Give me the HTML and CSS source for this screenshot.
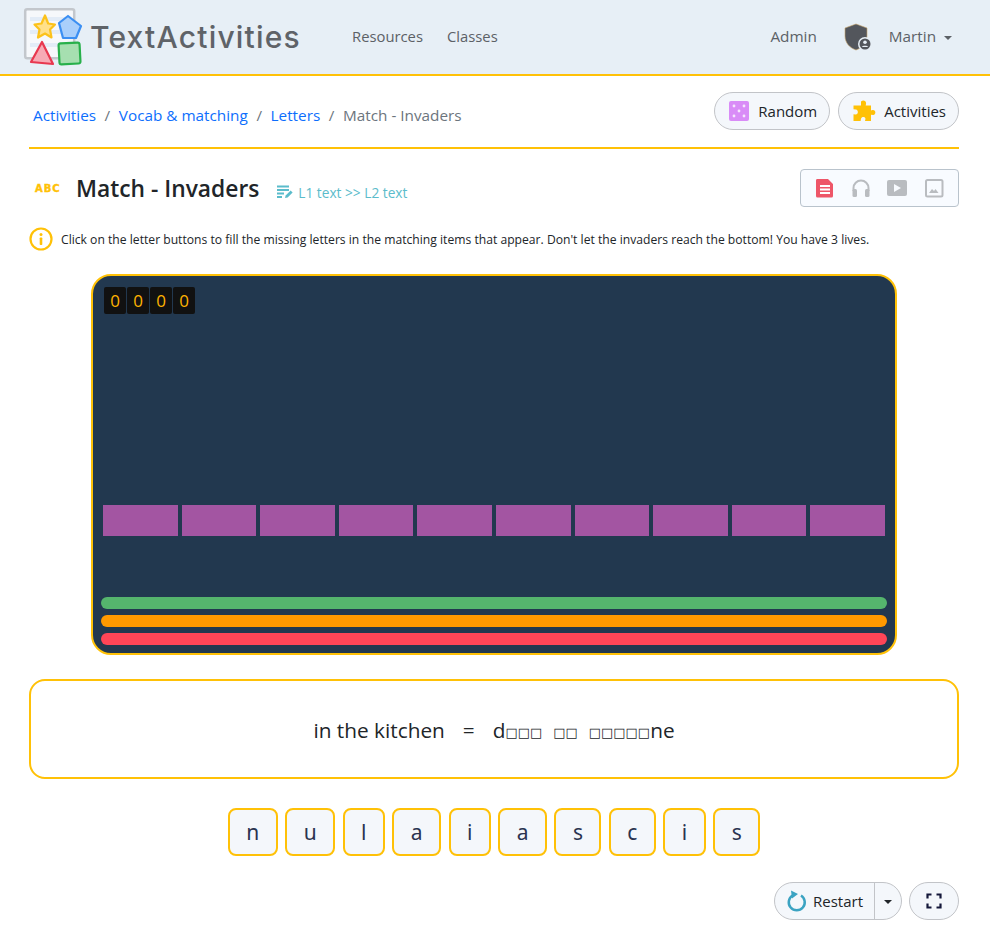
FILE: index.html
```html
<!DOCTYPE html>
<html lang="en">
<head>
  <meta charset="UTF-8" />
  <meta name="viewport" content="width=device-width, initial-scale=1" />
  <title>Match - Invaders</title>
  <link rel="stylesheet" href="styles.css">
</head>
<body>

<header class="topbar">
  <a class="brand">
    <svg class="brand-logo" width="60" height="60" viewBox="0 0 60 60">
      <rect x="2.200" y="2.200" width="49" height="49" rx="2" fill="#f6f8fb" stroke="#c3c7cc" stroke-width="2.500"/>
      <path d="M7 12h38M7 25h38M7 38h38" stroke="#e3ecf7" stroke-width="4"/>
      <path d="M22 8.500L25.200 16.500 32 17.500 27 22.500 28.500 30.500 22 26.500 15 30.500 16.500 22.500 11.500 17.500 18.500 16.500z" fill="#ffe08a" stroke="#fcc21b" stroke-width="2.200" stroke-linejoin="round"/>
      <path d="M45 9L58 19 53 31H40L36 16z" fill="#a9cffb" stroke="#3b8ff3" stroke-width="2.200" stroke-linejoin="round"/>
      <path d="M19 35L30 57 8 55z" fill="#f7aab5" stroke="#e8384f" stroke-width="2.200" stroke-linejoin="round"/>
      <rect x="36" y="36" width="21" height="21" rx="2" transform="rotate(-3 46 46)" fill="#a6dfb0" stroke="#28b04b" stroke-width="2.200"/>
    </svg>
    <span class="brand-name">TextActivities</span>
  </a>
  <nav class="nav-main">
    <a>Resources</a>
    <a>Classes</a>
  </nav>
  <nav class="nav-user">
    <a class="nav-admin">Admin</a>
    <svg class="shield" width="30" height="28" viewBox="0 0 30 28">
      <path d="M12 1l11 4v8c0 7-5 12-11 14C6 25 1 20 1 13V5z" fill="#53565c" stroke="#c9a66b" stroke-width="0.600"/>
      <circle cx="21" cy="21" r="7" fill="#e7eff6"/>
      <circle cx="21" cy="21" r="5.500" fill="#53565c"/>
      <circle cx="21" cy="19.300" r="1.800" fill="#e7eff6"/>
      <path d="M17.800 24c.6-1.600 5.800-1.600 6.400 0z" fill="#e7eff6"/>
    </svg>
    <a class="nav-name">Martin <span class="caret"></span></a>
  </nav>
</header>

<main class="page">
  <div class="crumb-row">
    <ol class="crumbs">
      <li><a>Activities</a></li>
      <li><a>Vocab &amp; matching</a></li>
      <li><a>Letters</a></li>
      <li class="current">Match - Invaders</li>
    </ol>
    <div class="crumb-btns">
      <button class="pill">
        <svg width="22" height="22" viewBox="0 0 22 22">
          <rect x="1" y="1" width="20" height="20" rx="2" fill="#d98cf7"/>
          <g fill="#f6e6fd"><circle cx="6" cy="6" r="1.400"/><circle cx="16" cy="6" r="1.400"/><circle cx="11" cy="11" r="1.400"/><circle cx="6" cy="16" r="1.400"/><circle cx="16" cy="16" r="1.400"/></g>
        </svg>
        Random
      </button>
      <button class="pill">
        <svg width="24" height="24" viewBox="0 0 24 24">
          <path d="M9 2.500c2.500-2 5.500-.5 5 2.500l-.3 1.500H19v5l1.500-.4c3-.6 4.200 3.900.8 5L19 15.800V22h-6l.4-1.800c.5-2.400-3.800-3-4.400-.4L8.600 22H1.500v-6.800l2 .3c2.700.3 3.400-4.300.4-5l-2.400-.2V6.500H9z" fill="#ffc107"/>
        </svg>
        Activities
      </button>
    </div>
  </div>

  <div class="title-row">
    <span class="abc">ABC</span>
    <h1>Match - Invaders</h1>
    <span class="mode">
      <svg width="16" height="14" viewBox="0 0 16 14">
        <path d="M0 1.500h12M0 5h12M0 8.500h7M0 12h5" stroke="#5bbccb" stroke-width="1.800"/>
        <path d="M8 13l.6-2.600 5-5 2 2-5 5z" fill="#5bbccb"/>
      </svg>
      L1 text &gt;&gt; L2 text
    </span>
    <div class="media-box">
      <svg width="20" height="20" viewBox="0 0 20 20"><path d="M2 1h11l5 5v12a1.500 1.500 0 0 1-1.500 1.500h-14A1.500 1.500 0 0 1 1 18V2.500A1.500 1.500 0 0 1 2 1z" fill="#ee5668"/><path d="M5 8h10M5 11.500h10M5 15h10" stroke="#fff" stroke-width="1.800"/></svg>
      <svg width="20" height="20" viewBox="0 0 20 20"><path d="M2.500 13v-3a7.500 7.500 0 0 1 15 0v3" fill="none" stroke="#b9bcc0" stroke-width="2"/><rect x="1.500" y="11" width="4.500" height="8" rx="1.500" fill="#b9bcc0"/><rect x="14" y="11" width="4.500" height="8" rx="1.500" fill="#b9bcc0"/></svg>
      <svg width="22" height="20" viewBox="0 0 22 20"><rect x="1" y="2" width="20" height="16" rx="2" fill="#b9bcc0"/><path d="M8 6l7 4-7 4z" fill="#f8fbff"/></svg>
      <svg width="20" height="20" viewBox="0 0 20 20"><rect x="2" y="2" width="16.500" height="16.500" rx="1.500" fill="none" stroke="#b9bcc0" stroke-width="2"/><path d="M5 15l3-4 2 2 1.500-2 3 4z" fill="#b9bcc0"/></svg>
    </div>
  </div>

  <p class="info">
    <svg width="24" height="24" viewBox="0 0 24 24">
      <circle cx="12" cy="12" r="10.500" fill="none" stroke="#ffc107" stroke-width="2.200"/>
      <circle cx="12" cy="7.500" r="1.500" fill="#ffc107"/>
      <rect x="10.700" y="10.500" width="2.600" height="7.500" rx="0.800" fill="#ffc107"/>
    </svg>
    Click on the letter buttons to fill the missing letters in the matching items that appear. Don't let the invaders reach the bottom! You have 3 lives.
  </p>

  <section class="game">
    <div class="score">
      <span>0</span><span>0</span><span>0</span><span>0</span>
    </div>
    <div class="invaders">
      <i></i><i></i><i></i><i></i><i></i><i></i><i></i><i></i><i></i><i></i>
    </div>
    <div class="lives">
      <i class="green"></i>
      <i class="orange"></i>
      <i class="red"></i>
    </div>
  </section>

  <div class="prompt">
    <span>in the kitchen</span>
    <span>=</span>
    <span class="answer">d<b>□□□</b> <b>□□</b> <b>□□□□□</b>ne</span>
  </div>

  <div class="letters">
    <button>n</button>
    <button>u</button>
    <button>l</button>
    <button>a</button>
    <button>i</button>
    <button>a</button>
    <button>s</button>
    <button>c</button>
    <button>i</button>
    <button>s</button>
  </div>

  <div class="controls">
    <div class="split">
      <button class="restart">
        <svg width="22" height="24" viewBox="0 0 22 24">
          <path d="M6.500 6.500a8 8 0 1 0 8.500 0" fill="none" stroke="#3ba3c2" stroke-width="2.500"/>
          <path d="M5 1.500l7 3.500-6 4.500z" fill="#3ba3c2"/>
        </svg>
        Restart
      </button>
      <button class="more"><span class="caret dark"></span></button>
    </div>
    <button class="fullscreen">
      <svg width="16" height="16" viewBox="0 0 16 16">
        <path d="M1.500 5.500v-4h4M10.500 1.500h4v4M14.500 10.500v4h-4M5.500 14.500h-4v-4" fill="none" stroke="#15183a" stroke-width="2.200"/>
      </svg>
    </button>
  </div>
</main>

</body>
</html>
```

FILE: styles.css
```css
body {
  font-family: 'Open Sans', 'Noto Sans', sans-serif;
  color: #212529;
  background: #fff;
  margin: 0;
}
button {
  font-family: inherit;
  color: inherit;
  cursor: pointer;
}

/* top bar */
.topbar {
  display: flex;
  align-items: center;
  height: 74px;
  padding: 0 38px 0 23px;
  background-color: #e7eff6;
  border-bottom: 2px solid #ffc107;
}
.brand {
  display: flex;
  align-items: center;
  gap: 7px;
  width: 329px;
}
.brand-name {
  font-family: Inter, sans-serif;
  font-size: 30px;
  font-weight: 500;
  letter-spacing: 1.2px;
  color: #5f6368;
}
.nav-main {
  display: flex;
  gap: 24px;
  margin-bottom: 3px;
  font-size: 14.800px;
  color: #5c6166;
}
.nav-user {
  margin-left: auto;
  margin-bottom: 3px;
  display: flex;
  align-items: center;
  font-size: 15.300px;
  color: #5c6166;
}
.shield {
  margin: 3px 15px 0 27px;
}
.caret {
  display: inline-block;
  margin-left: 4px;
  vertical-align: 2px;
  border-top: 4px solid #5c6166;
  border-left: 4px solid transparent;
  border-right: 4px solid transparent;
}
.caret.dark {
  margin: 0;
  vertical-align: middle;
  border-top-color: #212529;
}

.page {
  padding: 16px 31px 0 29px;
}

/* breadcrumb row */
.crumb-row {
  display: flex;
  justify-content: space-between;
  align-items: center;
  height: 38px;
  padding-bottom: 17px;
  border-bottom: 2px solid #ffc107;
}
.crumbs {
  display: flex;
  list-style: none;
  margin: 0;
  padding: 8px 0 0 4px;
  font-size: 15.300px;
  color: #6c757d;
}
.crumbs li + li::before {
  content: "/";
  padding: 0 8.600px;
  color: #6c757d;
}
.crumbs a {
  color: #0d6efd;
}
.crumb-btns {
  display: flex;
  gap: 8px;
}
.pill {
  display: flex;
  align-items: center;
  gap: 8px;
  height: 38px;
  padding: 0 12px 0 13px;
  font-size: 15px;
  background: #f4f7fb;
  border: 1px solid #c2c4c8;
  border-radius: 19px;
}

/* title */
.title-row {
  display: flex;
  align-items: center;
  height: 38px;
  margin-top: 20px;
}
.abc {
  width: 47px;
  padding-left: 6px;
  box-sizing: border-box;
  font-family: 'DejaVu Sans', sans-serif;
  font-size: 10px;
  font-weight: 700;
  letter-spacing: 1px;
  -webkit-text-stroke: 0.4px #ffc107;
  color: #ffc107;
}
h1 {
  margin: 0;
  font-size: 22.800px;
  font-weight: 600;
  color: #212529;
}
.mode {
  display: flex;
  align-items: center;
  gap: 5px;
  margin: 8px 0 0 18px;
  font-size: 13.700px;
  color: #5bbccb;
}
.media-box {
  display: flex;
  align-items: center;
  gap: 15.700px;
  margin-left: auto;
  height: 36px;
  padding: 0 14px;
  background: #f8fbff;
  border: 1px solid #b9c3cc;
  border-radius: 4px;
}

.info {
  display: flex;
  align-items: center;
  gap: 8px;
  height: 24px;
  margin: 20px 0 0;
  font-size: 12.150px;
  color: #212529;
}

/* game area */
.game {
  display: flex;
  flex-direction: column;
  box-sizing: border-box;
  width: 806px;
  height: 381px;
  margin: 23px 0 0 62px;
  padding: 11px 8px 8px;
  background-color: #22384f;
  border: 2px solid #ffc107;
  border-radius: 20px;
}
.score {
  display: flex;
  gap: 1px;
  margin-left: 3px;
}
.score span {
  width: 22px;
  height: 27px;
  line-height: 27px;
  text-align: center;
  font-size: 17px;
  color: #ffb300;
  background: #111;
  border-radius: 2px;
}
.invaders {
  display: grid;
  grid-template-columns: repeat(10, 1fr);
  gap: 4px;
  margin: 191px 2px 0;
}
.invaders i {
  height: 31px;
  background-color: #a355a2;
}
.lives {
  display: flex;
  flex-direction: column;
  gap: 6px;
  margin-top: auto;
}
.lives i {
  height: 12px;
  border-radius: 6px;
}
.green { background-color: #55b56d; }
.orange { background-color: #ff9900; }
.red { background-color: #ff4557; }

/* prompt */
.prompt {
  display: flex;
  justify-content: center;
  align-items: center;
  gap: 18px;
  height: 100px;
  margin-top: 24px;
  padding-top: 1px;
  box-sizing: border-box;
  border: 2px solid #ffc107;
  border-radius: 16px;
  font-size: 20.800px;
}
.answer {
  word-spacing: 5.500px;
}
.prompt b {
  font-family: 'DejaVu Sans', sans-serif;
  font-weight: 400;
  font-size: 13px;
  vertical-align: 1px;
}

/* letters */
.letters {
  display: flex;
  justify-content: center;
  gap: 7.500px;
  margin-top: 29px;
}
.letters button {
  height: 48px;
  min-width: 42px;
  padding: 0 16.450px;
  font-size: 21px;
  font-family: 'Noto Sans', sans-serif;
  color: #2a3350;
  background: #f4f7fb;
  border: 2px solid #ffc107;
  border-radius: 8px;
}

/* bottom controls */
.controls {
  display: flex;
  justify-content: flex-end;
  gap: 7px;
  margin-top: 26px;
}
.split {
  display: flex;
  height: 38px;
  background: #f4f7fb;
  border: 1px solid #c2c4c8;
  border-radius: 19px;
  box-sizing: border-box;
}
.split button {
  background: none;
  border: 0;
}
.restart {
  display: flex;
  align-items: center;
  gap: 5px;
  width: 99px;
  padding: 0 0 0 11px;
  font-size: 15px;
}
.more {
  width: 27px;
  padding: 0;
  border-left: 1px solid #c2c4c8 !important;
}
.fullscreen {
  width: 50px;
  height: 38px;
  background: #f4f7fb;
  border: 1px solid #c2c4c8;
  border-radius: 19px;
}
.fullscreen svg {
  display: block;
  margin: auto;
}
```
